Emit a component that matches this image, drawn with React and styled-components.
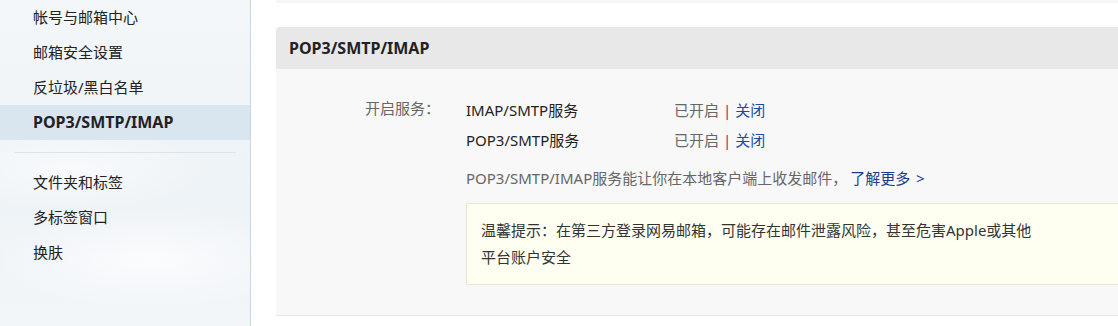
import React from 'react';
import styled, { createGlobalStyle } from 'styled-components';

const GlobalStyle = createGlobalStyle`
  html, body {
    margin: 0;
    padding: 0;
    overflow: hidden;
  }
  body {
    font-family: "Noto Sans", "Noto Sans CJK SC", sans-serif;
    font-size: 15px;
    color: #333;
  }
`;

const Page = styled.div`
  display: flex;
  width: 100vw;
  height: 326px;
  overflow: hidden;
  background: #fff;
`;

const Sidebar = styled.nav`
  flex: 0 0 250px;
  border-right: 1px solid #c9d5df;
  background:
    radial-gradient(ellipse 140px 40px at 70px 170px, rgba(255,255,255,0.6), transparent),
    radial-gradient(ellipse 160px 50px at 150px 260px, rgba(255,255,255,0.7), transparent),
    linear-gradient(180deg, #f3f7fa 0%, #eef3f7 55%, #f2f6f9 100%);
`;

const NavItem = styled.div`
  height: 35px;
  line-height: 35px;
  padding-left: 33px;
  font-size: ${p => (p.active ? '16px' : '15px')};
  color: #222;
  font-weight: ${p => (p.active ? 700 : 400)};
  background: ${p => (p.active ? '#d9e6f0' : 'transparent')};
`;

const NavDivider = styled.div`
  height: 1px;
  margin: 12px 14px 12px 15px;
  background: #dde3e8;
`;

const Main = styled.main`
  flex: 1;
  min-width: 0;
  overflow: hidden;
  padding-left: 25px;
`;

const TopStrip = styled.div`
  height: 3px;
  width: 900px;
  background: #f7f7f7;
  overflow: hidden;
`;

const Card = styled.section`
  width: 900px;
  margin-top: 24px;
  border-radius: 4px 4px 0 0;
  overflow: hidden;
`;

const CardHeader = styled.div`
  height: 42px;
  line-height: 42px;
  padding-left: 13px;
  background: #e8e8e8;
  font-size: 16px;
  font-weight: 700;
  color: #222;
`;

const CardBody = styled.div`
  background: #f8f8f8;
  border-bottom: 1px solid #e6e6e6;
  height: 247px;
  padding-top: 26px;
  box-sizing: border-box;
  display: grid;
  grid-template-columns: 156px 1fr;
  column-gap: 34px;
`;

const FieldLabel = styled.div`
  text-align: right;
  color: #666;
  line-height: 26px;
  margin-right: -8px;
`;

const Services = styled.div`
  display: flex;
  flex-direction: column;
`;

const ServiceRow = styled.div`
  display: grid;
  grid-template-columns: 208px auto;
  height: 30px;
  line-height: 30px;
  color: #222;
`;

const Status = styled.span`
  color: #666;
`;

const Sep = styled.span`
  color: #9b2d5c;
  margin: 0 4px;
`;

const Link = styled.a`
  color: #1e47a8;
  text-decoration: none;
`;

const Desc = styled.div`
  margin-top: 8px;
  height: 30px;
  line-height: 30px;
  color: #666;
`;

const MoreLink = styled.a`
  color: #1c3a8c;
  text-decoration: none;
  margin-left: 3px;
  word-spacing: 2px;
`;

const Notice = styled.div`
  margin-top: 10px;
  width: 700px;
  padding: 13px 14px;
  background: #fefff0;
  border: 1px solid #e9e8cf;
  color: #333;
  line-height: 27px;
`;

const NoticeText = styled.p`
  margin: 0;
  width: 556px;
`;

const services = ['IMAP/SMTP服务', 'POP3/SMTP服务'];

export default function App() {
  return (
    <>
      <GlobalStyle />
      <Page>
        <Sidebar>
          <NavItem>帐号与邮箱中心</NavItem>
          <NavItem>邮箱安全设置</NavItem>
          <NavItem>反垃圾/黑白名单</NavItem>
          <NavItem active>POP3/SMTP/IMAP</NavItem>
          <NavDivider />
          <NavItem>文件夹和标签</NavItem>
          <NavItem>多标签窗口</NavItem>
          <NavItem>换肤</NavItem>
        </Sidebar>
        <Main>
          <TopStrip>
            <svg width="240" height="3" viewBox="0 0 240 3">
              <rect x="90" y="0" width="4" height="3" fill="#4a4a4a" />
              <rect x="103" y="1" width="40" height="1" fill="#d8d8d8" />
              <rect x="168" y="0" width="32" height="3" fill="#ffcfb3" />
            </svg>
          </TopStrip>
          <Card>
            <CardHeader>POP3/SMTP/IMAP</CardHeader>
            <CardBody>
              <FieldLabel>开启服务：</FieldLabel>
              <Services>
                {services.map(name => (
                  <ServiceRow key={name}>
                    <span>{name}</span>
                    <span>
                      <Status>已开启</Status>
                      <Sep>|</Sep>
                      <Link href="#">关闭</Link>
                    </span>
                  </ServiceRow>
                ))}
                <Desc>
                  POP3/SMTP/IMAP服务能让你在本地客户端上收发邮件，
                  <MoreLink href="#">了解更多 &gt;</MoreLink>
                </Desc>
                <Notice>
                  <NoticeText>
                    温馨提示：在第三方登录网易邮箱，可能存在邮件泄露风险，甚至危害Apple或其他平台账户安全
                  </NoticeText>
                </Notice>
              </Services>
            </CardBody>
          </Card>
        </Main>
      </Page>
    </>
  );
}
